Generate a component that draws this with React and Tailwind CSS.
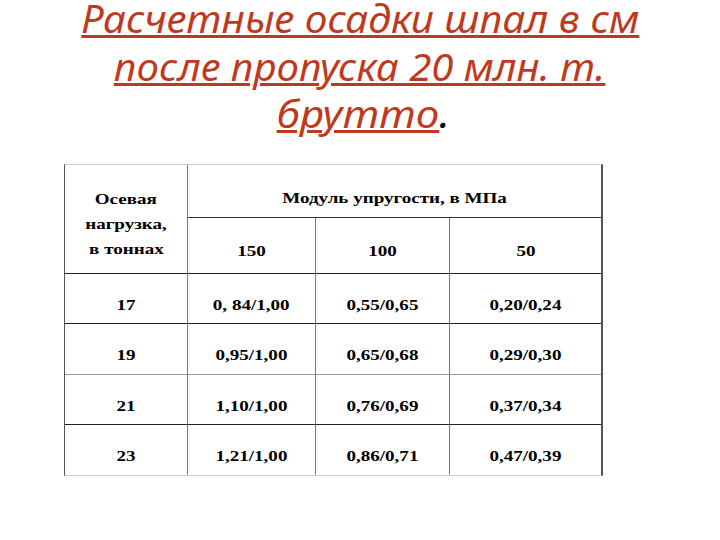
import React from "react";

const serif = { fontFamily: '"Liberation Serif", "DejaVu Serif", serif' };

function T({ children }) {
  return (
    <span className="inline-block scale-x-[1.36] font-bold text-[14px] leading-none text-black" style={serif}>
      {children}
    </span>
  );
}

const rows = [
  ["17", "0, 84/1,00", "0,55/0,65", "0,20/0,24", "border-b-[#222]"],
  ["19", "0,95/1,00", "0,65/0,68", "0,29/0,30", "border-b-[#999]"],
  ["21", "1,10/1,00", "0,76/0,69", "0,37/0,34", "border-b-[#222]"],
  ["23", "1,21/1,00", "0,86/0,71", "0,47/0,39", "border-b-transparent"],
];

const ul = "inline-block underline decoration-[3px] underline-offset-[2px]";

export default function App() {
  return (
    <div className="w-[720px] h-[540px] bg-white overflow-hidden">
      <div
        className="flex flex-col items-center italic text-[39px] text-[#bf3a1d]"
        style={{ fontFamily: '"Noto Sans", "Open Sans", sans-serif' }}
      >
        <div className="inline-block scale-x-[1.04] leading-[35px]"><span className={ul}>Расчетные осадки шпал в см</span></div>
        <div className="inline-block scale-x-[1.03] leading-[47px] mt-[7px]"><span className={ul}>после пропуска 20 млн. т.</span></div>
        <div className="inline-block scale-x-[1.08] translate-x-[3px] leading-[47px]"><span className={ul}>брутто</span><span className="inline-block text-black">.</span></div>
      </div>
      <div className="ml-[64px] mt-[28px] w-[539px] grid grid-cols-[123px_128px_134px_151px] grid-rows-[53px_56px_50px_51px_50px_50px] border-l border-l-[#555] border-t border-t-[#ccc] border-r-2 border-r-[#555] border-b border-b-[#ccc]">
        <div className="row-span-2 border-r border-r-[#777] border-b border-b-[#222] flex flex-col items-center justify-center pt-[12px] gap-[11px]">
          <T>Осевая</T>
          <T>нагрузка,</T>
          <T>в тоннах</T>
        </div>
        <div className="col-span-3 border-b border-b-[#333] flex items-center justify-center pt-[16px]">
          <T>Модуль упругости, в МПа</T>
        </div>
        <div className="border-r border-r-[#777] border-b border-b-[#222] flex items-center justify-center pt-[12px]"><T>150</T></div>
        <div className="border-r border-r-[#777] border-b border-b-[#222] flex items-center justify-center pt-[12px]"><T>100</T></div>
        <div className="border-b border-b-[#222] flex items-center justify-center pt-[12px]"><T>50</T></div>
        {rows.map((r, i) => (
          <React.Fragment key={i}>
            <div className={`border-r border-r-[#777] border-b ${r[4]} flex items-center justify-center pt-[14px]`}><T>{r[0]}</T></div>
            <div className={`border-r border-r-[#777] border-b ${r[4]} flex items-center justify-center pt-[14px]`}><T>{r[1]}</T></div>
            <div className={`border-r border-r-[#777] border-b ${r[4]} flex items-center justify-center pt-[14px]`}><T>{r[2]}</T></div>
            <div className={`border-b ${r[4]} flex items-center justify-center pt-[14px]`}><T>{r[3]}</T></div>
          </React.Fragment>
        ))}
      </div>
    </div>
  );
}
